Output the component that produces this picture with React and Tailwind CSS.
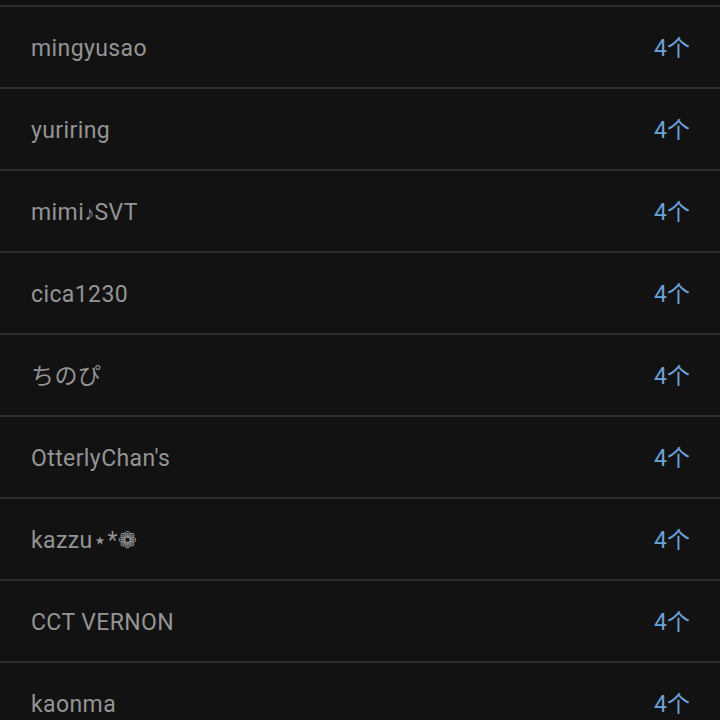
import React from 'react';

const names = [
  'mingyusao',
  'yuriring',
  'mimi♪SVT',
  'cica1230',
  'ちのぴ',
  "OtterlyChan's",
  'kazzu⋆*❁',
  'CCT VERNON',
  'kaonma',
];

const Name = ({ text }) => {
  if (text.includes('♪')) {
    const [a, b] = text.split('♪');
    return (
      <>
        {a}
        <span className="text-[20px]" style={{ fontFamily: '"Liberation Sans", sans-serif' }}>♪</span>
        {b}
      </>
    );
  }
  return text;
};

const Row = ({ name }) => (
  <div className="h-[82px] border-t-2 border-[#2e2e2e] flex items-center justify-between pl-[31px] pr-[30px] pt-1">
    <span className="text-[23px] tracking-[0.4px] text-[#949494]">
      <Name text={name} />
    </span>
    <span className="text-[23px] text-[#6aa2d8]">4个</span>
  </div>
);

export default function App() {
  return (
    <div
      className="w-[720px] h-[720px] overflow-hidden bg-[#121212] pt-[5px]"
      style={{ fontFamily: 'Roboto, "Noto Sans CJK SC", "DejaVu Sans", sans-serif' }}
    >
      {names.map((n) => (
        <Row key={n} name={n} />
      ))}
    </div>
  );
}
